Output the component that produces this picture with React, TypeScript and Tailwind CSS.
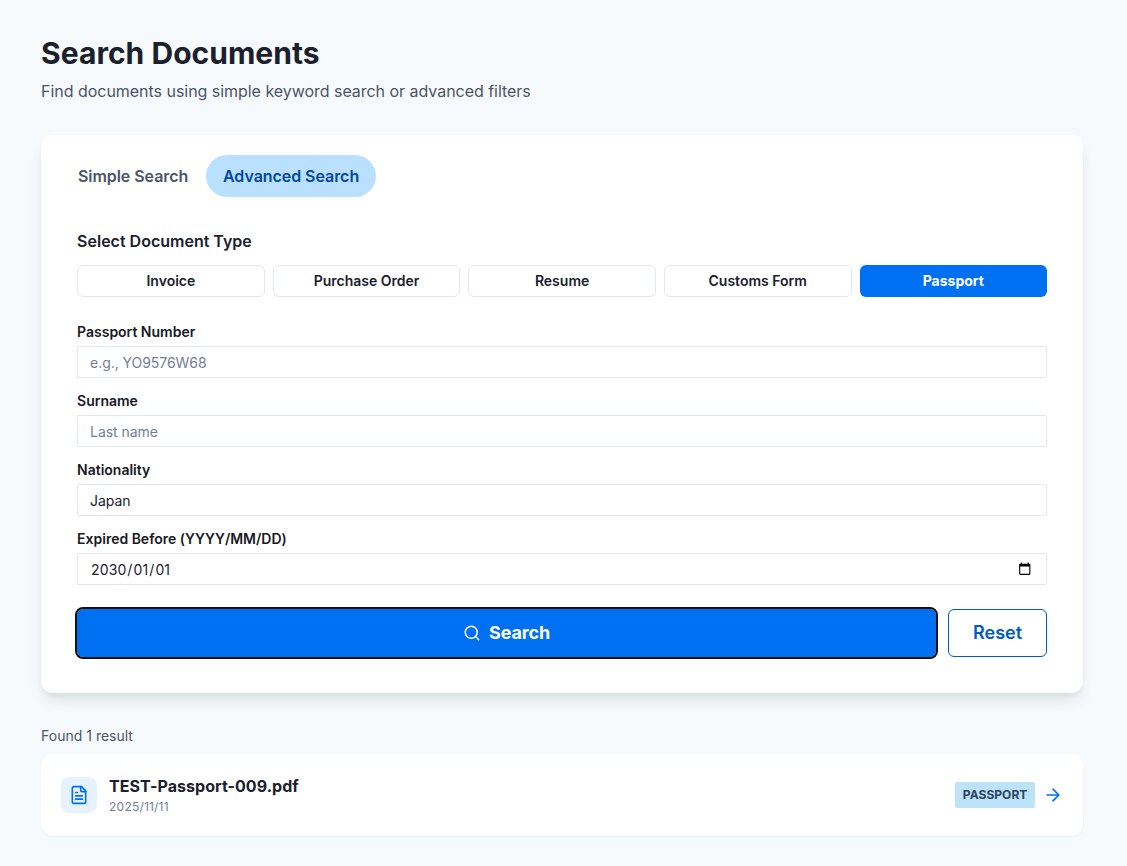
import type { ReactNode } from "react";

const types = ["Invoice", "Purchase Order", "Resume", "Customs Form", "Passport"];

function Field({ label, children }: { label: string; children: ReactNode }) {
  return (
    <label className="block">
      <span className="mb-1 block h-[21px] text-sm leading-[21px] font-semibold tracking-[-0.01px] text-[#171923]">{label}</span>
      {children}
    </label>
  );
}

const inputClass =
  "block h-8 w-full rounded-[1px] border border-[#e2e8f0] bg-white px-3 text-sm tracking-[-0.05px] text-[#1a202c] outline-none placeholder:text-[#718096]";

export default function App() {
  return (
    <div className="min-h-[866px] bg-[#f7fafc] pt-8 pr-[43.9px] pl-[41.1px] font-['Inter',sans-serif] text-[#1a202c]">
      <h1 className="h-[43px] text-[30px] leading-[43px] font-bold tracking-[0.03px]">Search Documents</h1>
      <p className="mt-1 h-6 text-base leading-6 tracking-[-0.035px] text-[#4a5568]">
        Find documents using simple keyword search or advanced filters
      </p>

      <main className="mt-8 h-[558px] rounded-xl bg-white px-9 pt-5 shadow-[0_10px_15px_-3px_rgba(0,0,0,0.1),0_4px_6px_-2px_rgba(0,0,0,0.05)]">
        <div className="-ml-4 flex h-[42px] font-semibold tracking-[-0.05px]">
          <button className="w-[144px] rounded-full text-[#4a5568]">Simple Search</button>
          <button className="ml-px w-[170px] rounded-full bg-[#bae0ff] text-[#0047a1]">Advanced Search</button>
        </div>
        <h2 className="mt-8 h-6 text-base leading-6 font-semibold">Select Document Type</h2>
        <div className="mt-3 grid grid-cols-5 gap-2">
          {types.map((t) => (
            <button
              key={t}
              className={
                t === "Passport"
                  ? "h-8 rounded-md bg-[#0070f3] text-sm font-bold text-white"
                  : "h-8 rounded-md border border-[#e2e8f0] text-sm font-semibold"
              }
            >
              {t}
            </button>
          ))}
        </div>
        <div className="mt-6 flex flex-col gap-3">
          <Field label="Passport Number"><input className={inputClass} placeholder="e.g., YO9576W68" /></Field>
          <Field label="Surname"><input className={inputClass} placeholder="Last name" /></Field>
          <Field label="Nationality"><input className={inputClass} defaultValue="Japan" /></Field>
          <Field label="Expired Before (YYYY/MM/DD)">
            <div className={inputClass + " flex! items-center justify-between"}>
              <span className="flex pt-0.5 tracking-[0.1px]">
                <span className="px-px">2030</span>/<span className="px-px">01</span>/<span className="px-px">01</span>
              </span>
              <svg width="13.5" height="13.5" viewBox="0 0 24 24" className="mr-[2.3px] mb-px" fill="#000">
                <path d="M20 3h-1V1h-2v2H7V1H5v2H4c-1.1 0-2 .9-2 2v16c0 1.1.9 2 2 2h16c1.1 0 2-.9 2-2V5c0-1.1-.9-2-2-2zm0 18H4V8h16v13z" />
              </svg>
            </div>
          </Field>
        </div>
        <div className="mt-6 flex gap-3">
          <button className="flex h-12 flex-1 items-center justify-center gap-2 rounded-md bg-[#0070f3] text-lg font-bold tracking-[-0.1px] text-white outline-2 outline-[#101010]">
            <svg width="18" height="18" viewBox="0 0 24 24" fill="none" stroke="currentColor" strokeWidth="2" strokeLinecap="round">
              <circle cx="11" cy="11" r="8" />
              <path d="m21 21-4.35-4.35" />
            </svg>
            Search
          </button>
          <button className="h-12 w-[99px] rounded-md border border-[#005bc4] text-lg font-semibold text-[#005bc4]">Reset</button>
        </div>
      </main>

      <p className="mt-8 h-[21px] text-sm leading-[21px] text-[#4a5568]">Found 1 result</p>
      <article className="mt-2 flex h-[82px] items-center rounded-xl bg-white px-5 shadow-[0_1px_2px_rgba(0,0,0,0.05)]">
        <div className="flex size-9 items-center justify-center rounded-lg bg-[#e6f2ff] text-[#0070f3]">
          <svg width="20" height="20" viewBox="0 0 24 24" fill="none" stroke="currentColor" strokeWidth="2" strokeLinecap="round" strokeLinejoin="round">
            <path d="M15 2H6a2 2 0 0 0-2 2v16a2 2 0 0 0 2 2h12a2 2 0 0 0 2-2V7Z" />
            <path d="M14 2v4a2 2 0 0 0 2 2h4M16 13H8M16 17H8M10 9H8" />
          </svg>
        </div>
        <div className="ml-3 flex-1">
          <div className="text-base leading-6 font-bold tracking-[0.04px]">TEST-Passport-009.pdf</div>
          <div className="text-xs leading-[18px] tracking-[0.2px] text-[#718096]">2025/11/11</div>
        </div>
        <span className="flex h-[26px] w-20 items-center justify-center rounded-[2px] bg-[#bee3f8] text-xs font-bold tracking-[0.05px] text-[#2a4365]">PASSPORT</span>
        <svg className="ml-2 text-[#0070f3]" width="20" height="20" viewBox="0 0 24 24" fill="none" stroke="currentColor" strokeWidth="2" strokeLinecap="round" strokeLinejoin="round">
          <path d="M5 12h14M12 5l7 7-7 7" />
        </svg>
      </article>
    </div>
  );
}
